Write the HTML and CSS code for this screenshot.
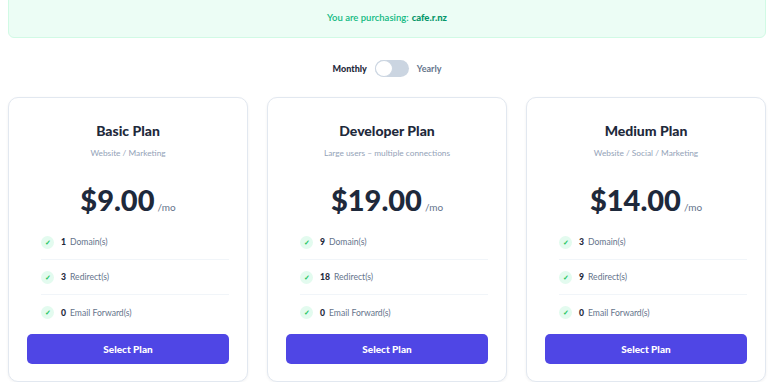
FILE: index.html
```html
<!DOCTYPE html>
<html lang="en">
<head>
  <meta charset="UTF-8" />
  <title>Choose a plan</title>
  <meta name="viewport" content="width=device-width, initial-scale=1" />
  <link rel="stylesheet" href="styles.css">
</head>
<body>

  <div class="notice">You are purchasing: <strong>cafe.r.nz</strong></div>

  <div class="billing">
    <span class="billing-label active">Monthly</span>
    <span class="switch"><span class="knob"></span></span>
    <span class="billing-label">Yearly</span>
  </div>

  <div class="plans">
    <div class="plan">
      <h2>Basic Plan</h2>
      <p class="plan-desc">Website / Marketing</p>
      <div class="price">$9.00<span>/mo</span></div>
      <ul class="features">
        <li><span class="tick">&#10003;</span><b>1</b> Domain(s)</li>
        <li><span class="tick">&#10003;</span><b>3</b> Redirect(s)</li>
        <li><span class="tick">&#10003;</span><b>0</b> Email Forward(s)</li>
      </ul>
      <button class="select-btn">Select Plan</button>
    </div>

    <div class="plan">
      <h2>Developer Plan</h2>
      <p class="plan-desc">Large users &ndash; multiple connections</p>
      <div class="price">$19.00<span>/mo</span></div>
      <ul class="features">
        <li><span class="tick">&#10003;</span><b>9</b> Domain(s)</li>
        <li><span class="tick">&#10003;</span><b>18</b> Redirect(s)</li>
        <li><span class="tick">&#10003;</span><b>0</b> Email Forward(s)</li>
      </ul>
      <button class="select-btn">Select Plan</button>
    </div>

    <div class="plan">
      <h2>Medium Plan</h2>
      <p class="plan-desc">Website / Social / Marketing</p>
      <div class="price">$14.00<span>/mo</span></div>
      <ul class="features">
        <li><span class="tick">&#10003;</span><b>3</b> Domain(s)</li>
        <li><span class="tick">&#10003;</span><b>9</b> Redirect(s)</li>
        <li><span class="tick">&#10003;</span><b>0</b> Email Forward(s)</li>
      </ul>
      <button class="select-btn">Select Plan</button>
    </div>
  </div>

</body>
</html>
```

FILE: styles.css
```css
* {
  box-sizing: border-box;
  margin: 0;
  padding: 0;
}

body {
  font-family: Lato, 'Noto Sans', sans-serif;
  background: #ffffff;
  color: #1e293b;
  padding: 0 2px 0 8px;
  overflow: hidden;
}

.notice {
  margin-top: -10px;
  height: 48px;
  padding-top: 6px;
  display: flex;
  justify-content: center;
  align-items: center;
  background: #ecfdf5;
  border: 1px solid #d1fae5;
  border-radius: 6px;
  color: #10b981;
  font-size: 9.5px;
  font-weight: 600;
}

.notice strong {
  margin-left: 3px;
  color: #059669;
  font-weight: 900;
}

.billing {
  display: flex;
  justify-content: center;
  align-items: center;
  gap: 8px;
  margin-top: 21px;
  height: 18px;
}

.billing-label {
  font-size: 9px;
  font-weight: 700;
  color: #64748b;
}

.billing-label.active {
  color: #1e293b;
  font-weight: 900;
}

.switch {
  width: 34px;
  height: 17px;
  border-radius: 999px;
  background: #cbd5e1;
  padding: 2px;
  display: flex;
}

.knob {
  width: 18px;
  height: 17px;
  margin: -2px;
  border-radius: 50%;
  background: #ffffff;
  border: 1px solid #cbd5e1;
}

.plans {
  display: grid;
  grid-template-columns: repeat(3, 240px);
  gap: 19px;
  margin-top: 20px;
}

.plan {
  background: #ffffff;
  border: 1px solid #e2e8f0;
  border-radius: 10px;
  box-shadow: 0 1px 3px rgba(15, 23, 42, 0.06);
  padding: 25px 18px 17px;
  display: flex;
  flex-direction: column;
  text-align: center;
}

.plan h2 {
  font-size: 14px;
  line-height: 16px;
  font-weight: 900;
  color: #1e293b;
}

.plan-desc {
  margin-top: 9px;
  font-size: 8.3px;
  line-height: 10px;
  color: #94a3b8;
}

.price {
  margin-top: 25px;
  height: 34px;
  font-size: 29px;
  line-height: 34px;
  font-weight: 900;
  color: #1e293b;
}

.price span {
  margin-left: 3px;
  font-size: 10px;
  line-height: 10px;
  font-weight: 400;
  color: #64748b;
}

.features {
  list-style: none;
  margin: 8px 0 0;
  padding: 0 0 0 14px;
  text-align: left;
}

.features li {
  display: flex;
  align-items: center;
  height: 35px;
  font-size: 8.6px;
  color: #64748b;
  border-bottom: 1px solid #f1f5f9;
}

.features li:last-child {
  border-bottom: none;
}

.features b {
  color: #1e293b;
  font-weight: 900;
  margin-right: 4px;
}

.tick {
  width: 13px;
  height: 13px;
  border-radius: 50%;
  background: #e3fbef;
  color: #22c55e;
  font-size: 7px;
  font-weight: 700;
  display: flex;
  justify-content: center;
  align-items: center;
  margin-right: 7px;
}

.select-btn {
  margin-top: 4px;
  height: 30px;
  border: none;
  border-radius: 5px;
  background: #4f46e5;
  color: #ffffff;
  font-family: inherit;
  font-size: 10px;
  font-weight: 900;
  cursor: pointer;
}
```
